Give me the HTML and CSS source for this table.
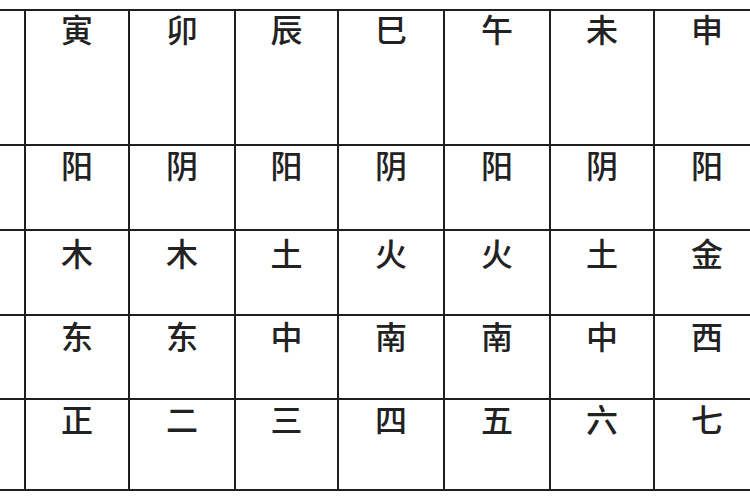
FILE: index.html
```html
<!DOCTYPE html>
<html lang="zh">
<head>
<meta charset="utf-8">
<link rel="stylesheet" href="styles.css">
</head>
<body>
<div class="sheet">
  <div class="cell r0"></div><div class="cell r0">寅</div><div class="cell r0">卯</div><div class="cell r0">辰</div><div class="cell r0">巳</div><div class="cell r0">午</div><div class="cell r0">未</div><div class="cell r0">申</div>
  <div class="cell r1"></div><div class="cell r1">阳</div><div class="cell r1">阴</div><div class="cell r1">阳</div><div class="cell r1">阴</div><div class="cell r1">阳</div><div class="cell r1">阴</div><div class="cell r1">阳</div>
  <div class="cell r2"></div><div class="cell r2">木</div><div class="cell r2">木</div><div class="cell r2">土</div><div class="cell r2">火</div><div class="cell r2">火</div><div class="cell r2">土</div><div class="cell r2">金</div>
  <div class="cell r3"></div><div class="cell r3">东</div><div class="cell r3">东</div><div class="cell r3">中</div><div class="cell r3">南</div><div class="cell r3">南</div><div class="cell r3">中</div><div class="cell r3">西</div>
  <div class="cell r4"><span class="mark"></span></div><div class="cell r4">正</div><div class="cell r4">二</div><div class="cell r4">三</div><div class="cell r4">四</div><div class="cell r4">五</div><div class="cell r4">六</div><div class="cell r4">七</div>
</div>
</body>
</html>
```

FILE: styles.css
```css
html, body {
  margin: 0;
  padding: 0;
  background: #ffffff;
  width: 750px;
  height: 500px;
  overflow: hidden;
}

.sheet {
  margin-top: 9px;
  margin-left: -80px;
  width: 839px;
  display: grid;
  grid-template-columns: 104px 102px 104px 101px 104px 104px 102px 104px;
  grid-template-rows: 133px 83px 83px 82px 89px;
  gap: 2px;
  padding: 2px 0;
  background: #1f1f1f;
}

.cell {
  background: #ffffff;
  color: #222222;
  font-family: "Noto Sans CJK SC", "Noto Sans CJK TC", sans-serif;
  font-size: 32px;
  font-weight: 500;
  line-height: 32px;
  text-align: center;
  padding-top: 1px;
}

.r1 { padding-top: 2px; }
.r2 { padding-top: 5px; }
.r3 { padding-top: 3px; }
.r4 {
  padding-top: 2px;
  display: flex;
  justify-content: center;
}

.r4:first-child {
  justify-content: flex-end;
  align-items: flex-start;
}

.mark {
  width: 4px;
  height: 3px;
  margin-top: 27px;
  margin-right: 21px;
  background: #444444;
  border-radius: 1px;
}
```
